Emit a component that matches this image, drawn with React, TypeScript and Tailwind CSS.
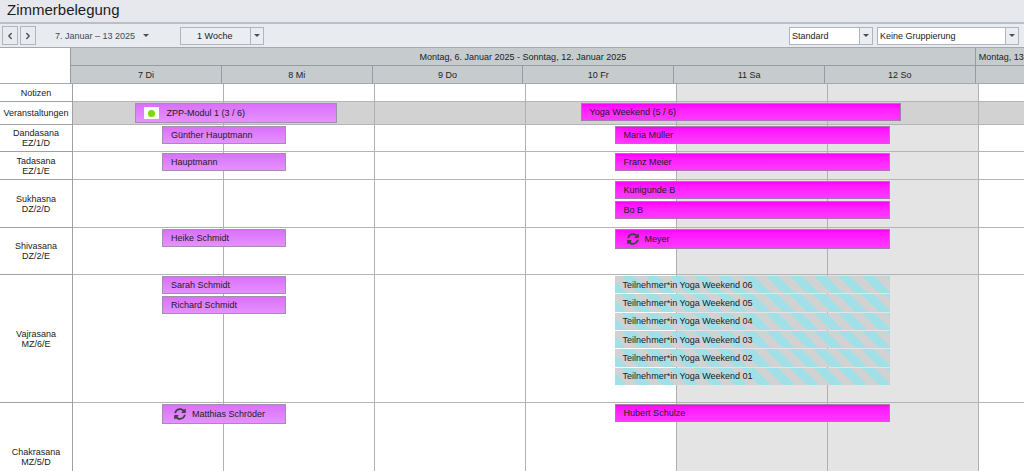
import React from "react";
import { FaSyncAlt } from "react-icons/fa";
import { FiChevronLeft, FiChevronRight } from "react-icons/fi";

type Item = { name: string; icon?: "sync" | "status" };
type Kind = "violet" | "magenta" | "open";
type Group = { start: number; span: number; kind: Kind; items: Item[] };
type Row = {
  title: string;
  code?: string;
  height: string;
  shaded?: boolean;
  groups: Group[];
};

const VISIBLE_DAYS = 6.3;

const week = (items: Item[]): Group => ({ start: 0.59, span: 0.822, kind: "violet", items });
const weekend = (items: Item[], kind: Kind = "magenta"): Group => ({
  start: 3.588,
  span: 1.822,
  kind,
  items,
});

const rows: Row[] = [
  { title: "Notizen", height: "h-[18px]", groups: [] },
  {
    title: "Veranstaltungen",
    height: "h-[23px]",
    shaded: true,
    groups: [
      { start: 0.408, span: 1.342, kind: "violet", items: [{ name: "ZPP-Modul 1 (3 / 6)", icon: "status" }] },
      { start: 3.362, span: 2.122, kind: "magenta", items: [{ name: "Yoga Weekend (5 / 6)" }] },
    ],
  },
  {
    title: "Dandasana",
    code: "EZ/1/D",
    height: "h-[27px]",
    groups: [week([{ name: "Günther Hauptmann" }]), weekend([{ name: "Maria Müller" }])],
  },
  {
    title: "Tadasana",
    code: "EZ/1/E",
    height: "h-[28px]",
    groups: [week([{ name: "Hauptmann" }]), weekend([{ name: "Franz Meier" }])],
  },
  {
    title: "Sukhasna",
    code: "DZ/2/D",
    height: "h-[48px]",
    groups: [weekend([{ name: "Kunigunde B" }, { name: "Bo B" }])],
  },
  {
    title: "Shivasana",
    code: "DZ/2/E",
    height: "h-[47px]",
    groups: [week([{ name: "Heike Schmidt" }]), weekend([{ name: "Meyer", icon: "sync" }])],
  },
  {
    title: "Vajrasana",
    code: "MZ/6/E",
    height: "h-[128px]",
    groups: [
      week([{ name: "Sarah Schmidt" }, { name: "Richard Schmidt" }]),
      weekend(
        ["06", "05", "04", "03", "02", "01"].map((n) => ({ name: `Teilnehmer*in Yoga Weekend ${n}` })),
        "open"
      ),
    ],
  },
  {
    title: "Chakrasana",
    code: "MZ/5/D",
    height: "h-[109px]",
    groups: [week([{ name: "Matthias Schröder", icon: "sync" }]), weekend([{ name: "Hubert Schulze" }])],
  },
];

const days = ["7 Di", "8 Mi", "9 Do", "10 Fr", "11 Sa", "12 So"];

const kindClass: Record<Kind, string> = {
  violet: "border border-[#a090ae] bg-linear-to-b from-[#da70fa] to-[#e591ff]",
  magenta: "border border-[#a878b0] bg-linear-to-b from-[#ff00ff] to-[#ff38ff]",
  open: "flex-1 bg-[repeating-linear-gradient(45deg,#a2e0e8_0px,#a2e0e8_8px,#d2d2d2_9px,#d2d2d2_16px,#a2e0e8_17px)]",
};

function Caret() {
  return <span className="border-x-[3px] border-t-[3px] border-x-transparent border-t-[#4a4f57]" />;
}

function Picker({ label, value, className, fieldClass }: { label: string; value: string; className: string; fieldClass: string }) {
  return (
    <div className={`grid h-[18px] ${className}`}>
      <select
        aria-label={label}
        defaultValue={value}
        className={`col-start-1 row-start-1 w-full appearance-none rounded-none border border-[#b0b5bd] pr-4 text-[#1c1c1c] outline-none ${fieldClass}`}
      >
        <option>{value}</option>
      </select>
      <span className="pointer-events-none col-start-1 row-start-1 flex w-[14px] items-center justify-center justify-self-end border border-[#b0b5bd] bg-[#eaedf1]">
        <Caret />
      </span>
    </div>
  );
}

function Bar({ item, kind }: { item: Item; kind: Kind }) {
  const size = kind === "open" ? "" : item.icon ? "h-[20px]" : "h-[18px]";
  return (
    <div className={`flex items-center overflow-hidden pl-2 whitespace-nowrap text-[#1c1c1c] ${size} ${kindClass[kind]}`}>
      {item.icon === "sync" && <FaSyncAlt className="mr-[6px] ml-[3px] size-3 text-[#404040]" />}
      {item.icon === "status" && (
        <span className="mr-2 flex h-3 w-[15px] items-center justify-center bg-white">
          <span className="size-[7px] rounded-full bg-[#74dc00]" />
        </span>
      )}
      {item.name}
    </div>
  );
}

export default function App() {
  return (
    <div className="flex h-screen flex-col overflow-hidden bg-white font-['Liberation_Sans',Arial,sans-serif] text-[9px] leading-[10px] text-[#222]">
      <header className="flex h-6 shrink-0 items-center border-b-2 border-[#b8bdc6] bg-[#e6e8ed] px-[7px] pb-[2px]">
        <h1 className="text-[15px] leading-5 text-[#1c1c1c]">Zimmerbelegung</h1>
      </header>

      <div className="flex h-6 shrink-0 items-center border-b border-[#a4a9b0] bg-[#e8ebf0] pr-[5px] pl-[2px]">
        <button aria-label="Zurück" className="flex h-[19px] w-4 items-center justify-center border border-[#b0b5bd] text-[#444]">
          <FiChevronLeft size={10} strokeWidth={3} />
        </button>
        <button aria-label="Weiter" className="ml-[2px] flex h-[19px] w-4 items-center justify-center border border-[#b0b5bd] text-[#444]">
          <FiChevronRight size={10} strokeWidth={3} />
        </button>
        <button className="ml-[19px] flex items-center gap-2 text-[#454a54]">
          7. Januar – 13 2025
          <Caret />
        </button>
        <Picker label="Zeitraum" value="1 Woche" className="ml-[31px] w-[84px]" fieldClass="pl-4 bg-[#eaedf1]" />
        <div className="ml-auto flex gap-1">
          <Picker label="Ansicht" value="Standard" className="w-[84px]" fieldClass="pl-[2px] bg-white" />
          <Picker label="Gruppierung" value="Keine Gruppierung" className="w-[142px]" fieldClass="pl-[2px] bg-white" />
        </div>
      </div>

      <div className="flex h-9 shrink-0 border-b border-[#a4a9b0]">
        <div className="w-[71px] shrink-0 border-r border-[#959ba2]" />
        <div className="grid min-w-0 flex-1 grid-cols-[repeat(6,minmax(0,1000fr))_minmax(0,320fr)] grid-rows-[18px_17px] bg-[#c6cbce] text-center">
          <div className="col-span-6 flex items-center justify-center border-r border-b border-[#959ba2]">
            Montag, 6. Januar 2025 - Sonntag, 12. Januar 2025
          </div>
          <div className="flex items-center overflow-hidden border-b border-[#959ba2] pl-[3px] whitespace-nowrap">
            Montag, 13. Januar 2025
          </div>
          {days.map((d) => (
            <div key={d} className="flex items-center justify-center border-r border-[#959ba2]">
              {d}
            </div>
          ))}
        </div>
      </div>

      <main>
        {rows.map((row) => (
          <section key={row.title} className={`flex ${row.height}`}>
            <div className="flex w-[73px] shrink-0 flex-col items-center justify-center border-r border-b border-[#a0a0a4]">
              <span>{row.title}</span>
              {row.code && <span>{row.code}</span>}
            </div>
            <div className={`grid min-w-0 flex-1 border-b border-[#b4b4b4] ${row.shaded ? "bg-[#d2d2d2]" : ""}`}>
              <div className="col-start-1 row-start-1 grid grid-cols-[repeat(6,minmax(0,10fr))_minmax(0,3fr)]">
                {days.map((d, i) => (
                  <div key={d} className={`border-r border-[#b0b0b0] ${i > 3 && !row.shaded ? "bg-[#e4e4e4]" : ""}`} />
                ))}
              </div>
              {row.groups.map((g) => (
                <div
                  key={g.start}
                  className={`col-start-1 row-start-1 flex flex-col pt-px ${g.kind === "open" ? "h-[110px] gap-px" : "gap-[2px]"}`}
                  style={{
                    marginLeft: `${(g.start / VISIBLE_DAYS) * 100}%`,
                    width: `${(g.span / VISIBLE_DAYS) * 100}%`,
                  }}
                >
                  {g.items.map((item) => (
                    <Bar key={item.name} item={item} kind={g.kind} />
                  ))}
                </div>
              ))}
            </div>
          </section>
        ))}
      </main>
    </div>
  );
}
